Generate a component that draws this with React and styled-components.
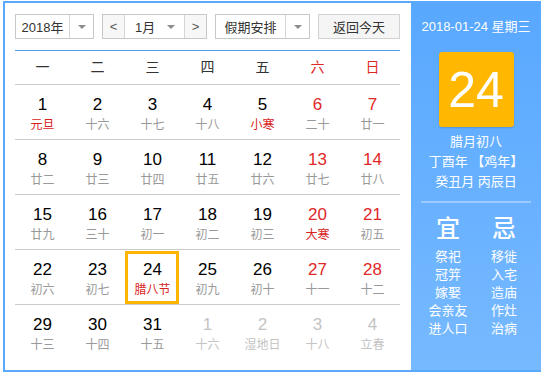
import React from "react";
import styled, { createGlobalStyle, css } from "styled-components";

const Global = createGlobalStyle`
  html, body { margin: 0; padding: 0; background: #fff; }
  body { font-family: "Liberation Sans", "Noto Sans CJK SC", Arial, sans-serif; }
  * { box-sizing: border-box; }
`;

const Frame = styled.div`
  margin: 1px 0 0 3px;
  width: 538px;
  height: 371px;
  border: 2px solid #5aa9ff;
  border-right: 0;
  display: flex;
  overflow: hidden;
`;

const Main = styled.div`
  width: 406px;
  padding: 11px 11px 0 10px;
  display: flex;
  flex-direction: column;
`;

const Toolbar = styled.div`
  display: flex;
  justify-content: space-between;
  height: 37px;
  padding-bottom: 11px;
  border-bottom: 1px solid #4a9ff5;
`;

const Select = styled.div`
  display: flex;
  height: 25px;
  border: 1px solid #c8c8c8;
  background: #fff;
  font-size: 13px;
  color: #333;
`;

const SelectText = styled.div`
  width: ${(p) => p.$w}px;
  display: flex;
  align-items: center;
  justify-content: center;
  border-right: 1px solid #d6d6d6;
`;

const Caret = styled.div`
  width: ${(p) => p.$w || 23}px;
  display: flex;
  align-items: center;
  justify-content: center;
  &::after {
    content: "";
    border-left: 4px solid transparent;
    border-right: 4px solid transparent;
    border-top: 4px solid #8c8c8c;
  }
`;

const ArrowBtn = styled.div`
  width: 22px;
  display: flex;
  align-items: center;
  justify-content: center;
  background: #f7f7f7;
  color: #555;
  ${(p) => (p.$side === "left" ? "border-right" : "border-left")}: 1px solid #d6d6d6;
`;

const MonthBox = styled.div`
  width: 59px;
  display: flex;
  align-items: center;
  padding-left: 10px;
  gap: 12px;
  &::after {
    content: "";
    border-left: 4px solid transparent;
    border-right: 4px solid transparent;
    border-top: 4px solid #8c8c8c;
  }
`;

const Button = styled.div`
  width: 82px;
  height: 25px;
  border: 1px solid #d2d2d2;
  background: #f5f5f5;
  font-size: 13px;
  color: #333;
  display: flex;
  align-items: center;
  justify-content: center;
`;

const Grid = styled.div`
  width: 385px;
  display: grid;
  grid-template-columns: repeat(7, 55px);
`;

const WeekHead = styled.div`
  height: 34px;
  line-height: 33px;
  text-align: center;
  font-size: 14px;
  color: ${(p) => (p.$red ? "#e02828" : "#333")};
  border-bottom: 1px solid #cccccc;
`;

const Cell = styled.div`
  height: 55px;
  padding-top: 10px;
  display: flex;
  flex-direction: column;
  align-items: center;
  border-bottom: ${(p) => (p.$last ? "0" : "1px solid #cccccc")};
  ${(p) =>
    p.$selected &&
    css`
      box-shadow: inset 0 1px 0 0 #fff, inset -1px 0 0 0 #fff, inset 0 4px 0 0 #ffb400, inset -4px 0 0 0 #ffb400, inset 3px 0 0 0 #ffb400, inset 0 -3px 0 0 #ffb400;
    `}
`;

const Num = styled.div`
  font-family: "Liberation Sans", Arial, sans-serif;
  font-size: 17px;
  line-height: 20px;
  color: ${(p) => (p.$other ? "#c4c4c4" : p.$red ? "#e02828" : "#000")};
`;

const Lunar = styled.div`
  font-size: 12px;
  line-height: 20px;
  color: ${(p) => (p.$other ? "#c4c4c4" : p.$fest ? "#d82222" : "#999")};
`;

const Side = styled.div`
  width: 130px;
  background: linear-gradient(#58a8ff, #77b9ff);
  color: #fff;
  display: flex;
  flex-direction: column;
  align-items: center;
  font-family: "Liberation Sans", "Noto Sans CJK SC", sans-serif;
`;

const DateLine = styled.div`
  margin-top: 14px;
  font-size: 13px;
  line-height: 20px;
`;

const DayBox = styled.div`
  margin-top: 15px;
  width: 75px;
  height: 75px;
  background: #ffb700;
  border-radius: 3px;
  box-shadow: 0 1px 2px rgba(0, 0, 0, 0.15);
  display: flex;
  align-items: center;
  justify-content: center;
  font-family: "Liberation Sans", Arial, sans-serif;
  font-size: 50px;
`;

const InfoLines = styled.div`
  margin-top: 5px;
  font-size: 13px;
  line-height: 20px;
  text-align: center;
`;

const Divider = styled.div`
  margin-top: 9px;
  width: 110px;
  height: 2px;
  background: #9ccbff;
`;

const Columns = styled.div`
  margin-top: 11px;
  width: 112px;
  display: grid;
  grid-template-columns: 56px 56px;
`;

const Col = styled.div`
  display: flex;
  flex-direction: column;
  align-items: center;
`;

const ColHead = styled.div`
  font-size: 24px;
  line-height: 30px;
  font-weight: 500;
  margin-bottom: 4px;
`;

const Item = styled.div`
  font-size: 13px;
  line-height: 18px;
`;

const weeks = [
  [
    ["1", "元旦", 0, 1],
    ["2", "十六"],
    ["3", "十七"],
    ["4", "十八"],
    ["5", "小寒", 0, 1],
    ["6", "二十", 1],
    ["7", "廿一", 1],
  ],
  [
    ["8", "廿二"],
    ["9", "廿三"],
    ["10", "廿四"],
    ["11", "廿五"],
    ["12", "廿六"],
    ["13", "廿七", 1],
    ["14", "廿八", 1],
  ],
  [
    ["15", "廿九"],
    ["16", "三十"],
    ["17", "初一"],
    ["18", "初二"],
    ["19", "初三"],
    ["20", "大寒", 1, 1],
    ["21", "初五", 1],
  ],
  [
    ["22", "初六"],
    ["23", "初七"],
    ["24", "腊八节", 0, 1, 0, 1],
    ["25", "初九"],
    ["26", "初十"],
    ["27", "十一", 1],
    ["28", "十二", 1],
  ],
  [
    ["29", "十三"],
    ["30", "十四"],
    ["31", "十五"],
    ["1", "十六", 0, 0, 1],
    ["2", "湿地日", 0, 0, 1],
    ["3", "十八", 0, 0, 1],
    ["4", "立春", 0, 0, 1],
  ],
];

const heads = ["一", "二", "三", "四", "五", "六", "日"];
const yi = ["祭祀", "冠笄", "嫁娶", "会亲友", "进人口"];
const ji = ["移徙", "入宅", "造庙", "作灶", "治病"];

export default function App() {
  return (
    <>
      <Global />
      <Frame>
        <Main>
          <Toolbar>
            <Select>
              <SelectText $w={54}>2018年</SelectText>
              <Caret />
            </Select>
            <Select>
              <ArrowBtn $side="left">&lt;</ArrowBtn>
              <MonthBox>1月</MonthBox>
              <ArrowBtn $side="right">&gt;</ArrowBtn>
            </Select>
            <Select>
              <SelectText $w={70}>假期安排</SelectText>
              <Caret />
            </Select>
            <Button>返回今天</Button>
          </Toolbar>
          <Grid>
            {heads.map((h, i) => (
              <WeekHead key={h} $red={i >= 5}>
                {h}
              </WeekHead>
            ))}
            {weeks.map((w, wi) =>
              w.map(([n, l, red, fest, other, sel], di) => (
                <Cell key={wi + "-" + di} $last={wi === weeks.length - 1} $selected={!!sel}>
                  <Num $red={red || di >= 5} $other={other}>
                    {n}
                  </Num>
                  <Lunar $fest={fest} $other={other}>
                    {l}
                  </Lunar>
                </Cell>
              ))
            )}
          </Grid>
        </Main>
        <Side>
          <DateLine>2018-01-24 星期三</DateLine>
          <DayBox>24</DayBox>
          <InfoLines>
            <div>腊月初八</div>
            <div>丁酉年 【鸡年】</div>
            <div>癸丑月 丙辰日</div>
          </InfoLines>
          <Divider />
          <Columns>
            <Col>
              <ColHead>宜</ColHead>
              {yi.map((t) => (
                <Item key={t}>{t}</Item>
              ))}
            </Col>
            <Col>
              <ColHead>忌</ColHead>
              {ji.map((t) => (
                <Item key={t}>{t}</Item>
              ))}
            </Col>
          </Columns>
        </Side>
      </Frame>
    </>
  );
}
